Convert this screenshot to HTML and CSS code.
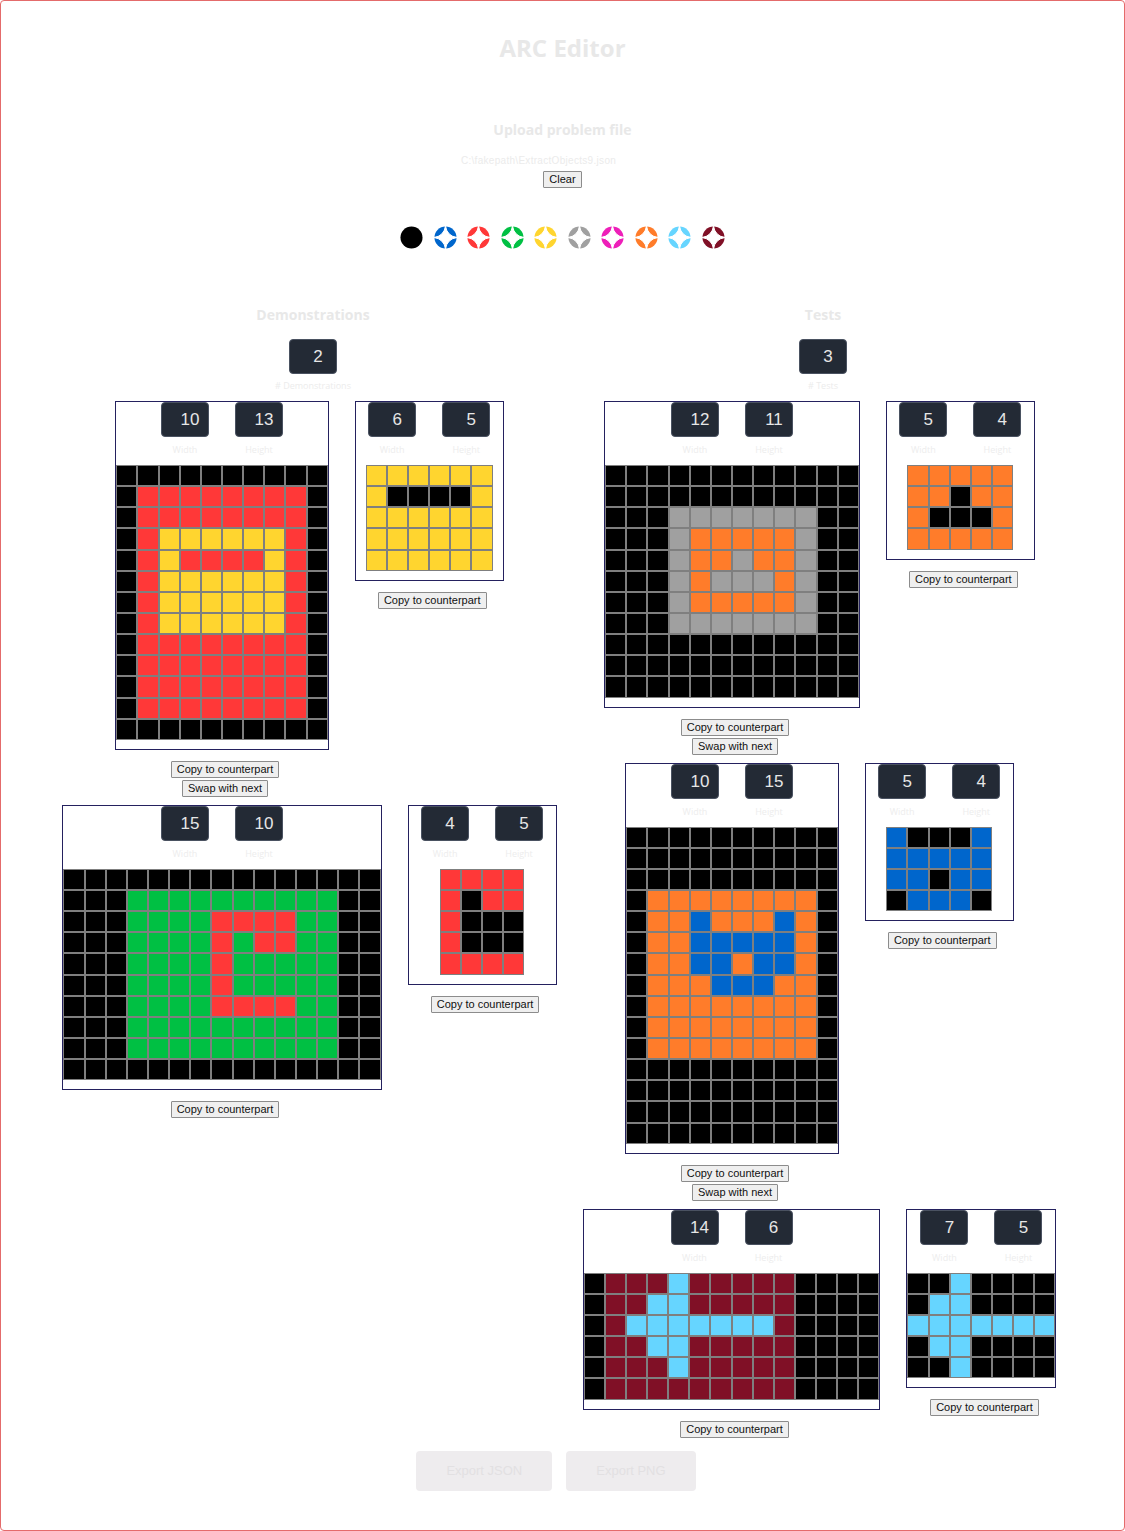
FILE: index.html
```html
<!DOCTYPE html>
<html lang="en">
<head>
<meta charset="utf-8">
<title>ARC Editor</title>
<link rel="stylesheet" href="styles.css">
</head>
<body>
<div class="page">
  <h1 class="title">ARC Editor</h1>

  <section class="upload">
    <h2 class="upload-title">Upload problem file</h2>
    <div class="filename">C:\fakepath\ExtractObjects9.json</div>
    <button class="btn">Clear</button>
  </section>

  <div class="palette">
    <svg class="swatch" viewBox="0 0 24 24"><circle class="p0" cx="12" cy="12" r="11.5"/></svg>
    <svg class="swatch" viewBox="0 0 24 24"><circle class="p1" cx="12" cy="12" r="11.5"/><path class="star" d="M12 0Q13.6 10.4 24 12Q13.6 13.6 12 24Q10.4 13.6 0 12Q10.4 10.4 12 0Z"/></svg>
    <svg class="swatch" viewBox="0 0 24 24"><circle class="p2" cx="12" cy="12" r="11.5"/><path class="star" d="M12 0Q13.6 10.4 24 12Q13.6 13.6 12 24Q10.4 13.6 0 12Q10.4 10.4 12 0Z"/></svg>
    <svg class="swatch" viewBox="0 0 24 24"><circle class="p3" cx="12" cy="12" r="11.5"/><path class="star" d="M12 0Q13.6 10.4 24 12Q13.6 13.6 12 24Q10.4 13.6 0 12Q10.4 10.4 12 0Z"/></svg>
    <svg class="swatch" viewBox="0 0 24 24"><circle class="p4" cx="12" cy="12" r="11.5"/><path class="star" d="M12 0Q13.6 10.4 24 12Q13.6 13.6 12 24Q10.4 13.6 0 12Q10.4 10.4 12 0Z"/></svg>
    <svg class="swatch" viewBox="0 0 24 24"><circle class="p5" cx="12" cy="12" r="11.5"/><path class="star" d="M12 0Q13.6 10.4 24 12Q13.6 13.6 12 24Q10.4 13.6 0 12Q10.4 10.4 12 0Z"/></svg>
    <svg class="swatch" viewBox="0 0 24 24"><circle class="p6" cx="12" cy="12" r="11.5"/><path class="star" d="M12 0Q13.6 10.4 24 12Q13.6 13.6 12 24Q10.4 13.6 0 12Q10.4 10.4 12 0Z"/></svg>
    <svg class="swatch" viewBox="0 0 24 24"><circle class="p7" cx="12" cy="12" r="11.5"/><path class="star" d="M12 0Q13.6 10.4 24 12Q13.6 13.6 12 24Q10.4 13.6 0 12Q10.4 10.4 12 0Z"/></svg>
    <svg class="swatch" viewBox="0 0 24 24"><circle class="p8" cx="12" cy="12" r="11.5"/><path class="star" d="M12 0Q13.6 10.4 24 12Q13.6 13.6 12 24Q10.4 13.6 0 12Q10.4 10.4 12 0Z"/></svg>
    <svg class="swatch" viewBox="0 0 24 24"><circle class="p9" cx="12" cy="12" r="11.5"/><path class="star" d="M12 0Q13.6 10.4 24 12Q13.6 13.6 12 24Q10.4 13.6 0 12Q10.4 10.4 12 0Z"/></svg>
  </div>

  <div class="columns">
    <section class="col">
      <h2 class="col-title">Demonstrations</h2>
      <div class="num count">2</div>
      <div class="count-label"># Demonstrations</div>
      <div class="pairs">
        <div class="pair">
          <div class="item">
            <div class="box">
              <div class="dims">
                <div class="dim"><div class="num">10</div><span class="dim-label">Width</span></div>
                <div class="dim"><div class="num">13</div><span class="dim-label">Height</span></div>
              </div>
              <div class="grid" data-rows="0000000000|0222222220|0222222220|0244444420|0242222420|0244444420|0244444420|0244444420|0222222220|0222222220|0222222220|0222222220|0000000000"></div>
            </div>
            <div class="actions">
              <button class="btn">Copy to counterpart</button>
              <button class="btn">Swap with next</button>
            </div>
          </div>
          <div class="item">
            <div class="box">
              <div class="dims">
                <div class="dim"><div class="num">6</div><span class="dim-label">Width</span></div>
                <div class="dim"><div class="num">5</div><span class="dim-label">Height</span></div>
              </div>
              <div class="grid" data-rows="444444|400004|444444|444444|444444"></div>
            </div>
            <div class="actions">
              <button class="btn">Copy to counterpart</button>
            </div>
          </div>
        </div>

        <div class="pair">
          <div class="item">
            <div class="box">
              <div class="dims">
                <div class="dim"><div class="num">15</div><span class="dim-label">Width</span></div>
                <div class="dim"><div class="num">10</div><span class="dim-label">Height</span></div>
              </div>
              <div class="grid" data-rows="000000000000000|000333333333300|000333322223300|000333323223300|000333323333300|000333323333300|000333322223300|000333333333300|000333333333300|000000000000000"></div>
            </div>
            <div class="actions">
              <button class="btn">Copy to counterpart</button>
            </div>
          </div>
          <div class="item">
            <div class="box">
              <div class="dims">
                <div class="dim"><div class="num">4</div><span class="dim-label">Width</span></div>
                <div class="dim"><div class="num">5</div><span class="dim-label">Height</span></div>
              </div>
              <div class="grid" data-rows="2222|2022|2000|2000|2222"></div>
            </div>
            <div class="actions">
              <button class="btn">Copy to counterpart</button>
            </div>
          </div>
        </div>
      </div>
    </section>

    <section class="col">
      <h2 class="col-title">Tests</h2>
      <div class="num count">3</div>
      <div class="count-label"># Tests</div>
      <div class="pairs">
        <div class="pair">
          <div class="item">
            <div class="box">
              <div class="dims">
                <div class="dim"><div class="num">12</div><span class="dim-label">Width</span></div>
                <div class="dim"><div class="num">11</div><span class="dim-label">Height</span></div>
              </div>
              <div class="grid" data-rows="000000000000|000000000000|000555555500|000577777500|000577577500|000575557500|000577777500|000555555500|000000000000|000000000000|000000000000"></div>
            </div>
            <div class="actions">
              <button class="btn">Copy to counterpart</button>
              <button class="btn">Swap with next</button>
            </div>
          </div>
          <div class="item">
            <div class="box">
              <div class="dims">
                <div class="dim"><div class="num">5</div><span class="dim-label">Width</span></div>
                <div class="dim"><div class="num">4</div><span class="dim-label">Height</span></div>
              </div>
              <div class="grid" data-rows="77777|77077|70007|77777"></div>
            </div>
            <div class="actions">
              <button class="btn">Copy to counterpart</button>
            </div>
          </div>
        </div>

        <div class="pair">
          <div class="item">
            <div class="box">
              <div class="dims">
                <div class="dim"><div class="num">10</div><span class="dim-label">Width</span></div>
                <div class="dim"><div class="num">15</div><span class="dim-label">Height</span></div>
              </div>
              <div class="grid" data-rows="0000000000|0000000000|0000000000|0777777770|0771777170|0771111170|0771171170|0777111770|0777777770|0777777770|0777777770|0000000000|0000000000|0000000000|0000000000"></div>
            </div>
            <div class="actions">
              <button class="btn">Copy to counterpart</button>
              <button class="btn">Swap with next</button>
            </div>
          </div>
          <div class="item">
            <div class="box">
              <div class="dims">
                <div class="dim"><div class="num">5</div><span class="dim-label">Width</span></div>
                <div class="dim"><div class="num">4</div><span class="dim-label">Height</span></div>
              </div>
              <div class="grid" data-rows="10001|11111|11011|01110"></div>
            </div>
            <div class="actions">
              <button class="btn">Copy to counterpart</button>
            </div>
          </div>
        </div>

        <div class="pair">
          <div class="item">
            <div class="box">
              <div class="dims">
                <div class="dim"><div class="num">14</div><span class="dim-label">Width</span></div>
                <div class="dim"><div class="num">6</div><span class="dim-label">Height</span></div>
              </div>
              <div class="grid" data-rows="09998999990000|09988999990000|09888888890000|09988999990000|09998999990000|09999999990000"></div>
            </div>
            <div class="actions">
              <button class="btn">Copy to counterpart</button>
            </div>
          </div>
          <div class="item">
            <div class="box">
              <div class="dims">
                <div class="dim"><div class="num">7</div><span class="dim-label">Width</span></div>
                <div class="dim"><div class="num">5</div><span class="dim-label">Height</span></div>
              </div>
              <div class="grid" data-rows="0080000|0880000|8888888|0880000|0080000"></div>
            </div>
            <div class="actions">
              <button class="btn">Copy to counterpart</button>
            </div>
          </div>
        </div>
      </div>
    </section>
  </div>

  <div class="exports">
    <button class="export">Export JSON</button>
    <button class="export">Export PNG</button>
  </div>
</div>
<script src="script.js"></script>
</body>
</html>
```

FILE: styles.css
```css
* { box-sizing: border-box; }

body {
  margin: 0;
  background: #ffffff;
  font-family: "Open Sans", "Liberation Sans", sans-serif;
}

.page {
  min-height: 1531px;
  border: 1px solid #e46b6b;
  border-radius: 4px;
  display: flex;
  flex-direction: column;
  align-items: center;
}

.title {
  margin: 31px 0 0;
  font-size: 24px;
  line-height: 32px;
  font-weight: 700;
  color: #e8e8e8;
}

.upload {
  display: flex;
  flex-direction: column;
  align-items: center;
  margin-top: 56px;
}

.upload-title {
  margin: 0;
  font-size: 14px;
  line-height: 20px;
  font-weight: 700;
  color: #e8e8e8;
}

.filename {
  margin-top: 15px;
  padding-right: 48px;
  font: 10px/12px "Liberation Sans", Arial, sans-serif;
  letter-spacing: 0.3px;
  color: #ebebeb;
}

.upload .btn { margin-top: 4px; }

.btn {
  display: block;
  height: 17px;
  padding: 0 5px;
  font: 11px/15px "Liberation Sans", Arial, sans-serif;
  color: #111111;
  background: #efefef;
  border: 1px solid #8c8c8c;
  border-radius: 1px;
}

.palette {
  display: flex;
  gap: 10.5px;
  margin-top: 38px;
}

.swatch {
  display: block;
  width: 23px;
  height: 23px;
}

.star { fill: #ffffff; stroke: #ffffff; stroke-width: 1; }

.p0 { fill: #000000; }
.p1 { fill: #0066cc; }
.p2 { fill: #ff3838; }
.p3 { fill: #00c043; }
.p4 { fill: #ffd52f; }
.p5 { fill: #a0a0a0; }
.p6 { fill: #ee1fb9; }
.p7 { fill: #ff7c2a; }
.p8 { fill: #66d5ff; }
.p9 { fill: #801026; }

.columns {
  align-self: stretch;
  display: flex;
  padding-left: 57px;
  margin-top: 56px;
}

.col {
  width: 510px;
  display: flex;
  flex-direction: column;
  align-items: center;
}

.col-title {
  margin: 0;
  font-size: 14px;
  line-height: 20px;
  font-weight: 700;
  color: #e8e8e8;
}

.num {
  width: 48px;
  height: 35px;
  background: #232a35;
  border: 1px solid #4a5261;
  border-radius: 4px;
  color: #e6e6e6;
  font: 17px/33px "Liberation Sans", Arial, sans-serif;
  text-align: center;
  padding-left: 10px;
}

.count { margin-top: 14px; }

.count-label {
  margin-top: 6px;
  font-size: 9px;
  line-height: 12px;
  color: #ececec;
}

.pairs {
  align-self: stretch;
  margin-top: 9px;
  display: flex;
  flex-direction: column;
  gap: 8px;
}

.pair {
  display: flex;
  justify-content: center;
  align-items: flex-start;
  gap: 26px;
  padding-right: 7px;
}

.item {
  display: flex;
  flex-direction: column;
  align-items: center;
}

.box {
  min-width: 149px;
  border: 1px solid #24215e;
  padding-bottom: 9px;
  display: flex;
  flex-direction: column;
  align-items: center;
}

.dims {
  display: flex;
  gap: 26px;
  margin-bottom: 9px;
}

.dim {
  display: flex;
  flex-direction: column;
  align-items: center;
}

.dim-label {
  margin-top: 7px;
  font-size: 9px;
  line-height: 12px;
  color: #ededed;
}

.grid {
  display: flex;
  flex-direction: column;
}

.row { display: flex; }

.cell {
  width: 21.15px;
  height: 21.15px;
  border: 1px solid #7f7f7f;
}

.c0 { background: #000000; }
.c1 { background: #0066cc; }
.c2 { background: #ff3838; }
.c3 { background: #00c043; }
.c4 { background: #ffd52f; }
.c5 { background: #a0a0a0; }
.c6 { background: #ee1fb9; }
.c7 { background: #ff7c2a; }
.c8 { background: #66d5ff; }
.c9 { background: #801026; }

.actions {
  display: flex;
  flex-direction: column;
  align-items: center;
  gap: 2px;
  margin-top: 11px;
  padding-left: 6px;
}

.exports {
  display: flex;
  gap: 14px;
  margin-top: 13px;
  padding-right: 13px;
}

.export {
  height: 40px;
  padding: 0 30px;
  border: none;
  border-radius: 4px;
  background: #eeecee;
  color: #e2e0e2;
  font: 13px "Liberation Sans", Arial, sans-serif;
}
```

FILE: script.js
```js
document.querySelectorAll('.grid').forEach(function (grid) {
  grid.dataset.rows.split('|').forEach(function (r) {
    var row = document.createElement('div');
    row.className = 'row';
    for (var i = 0; i < r.length; i++) {
      var cell = document.createElement('div');
      cell.className = 'cell c' + r[i];
      row.appendChild(cell);
    }
    grid.appendChild(row);
  });
});
```
